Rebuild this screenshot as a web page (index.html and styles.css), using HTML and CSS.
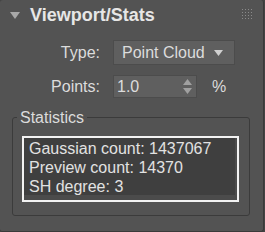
FILE: index.html
```html
<!DOCTYPE html>
<html lang="en">

<head>
    <meta charset="UTF-8">
    <meta name="viewport" content="width=device-width, initial-scale=1.0">
    <link rel="stylesheet" href="styles.css">
    <title>Viewport/Stats</title>
</head>

<body>
    <div class="panel">
        <div class="panel-head">
            <svg class="caret" width="10" height="7" viewBox="0 0 10 7">
                <polygon points="0,0 10,0 5,7" fill="#a8a8a8" />
            </svg>
            <span class="panel-title">Viewport/Stats</span>
            <svg class="grip" width="10" height="10" viewBox="0 0 10 10">
                <g fill="#8a8a8a">
                    <rect x="0" y="0" width="1" height="1" /><rect x="3" y="0" width="1" height="1" /><rect x="6" y="0" width="1" height="1" /><rect x="9" y="0" width="1" height="1" />
                    <rect x="0" y="3" width="1" height="1" /><rect x="3" y="3" width="1" height="1" /><rect x="6" y="3" width="1" height="1" /><rect x="9" y="3" width="1" height="1" />
                    <rect x="0" y="6" width="1" height="1" /><rect x="3" y="6" width="1" height="1" /><rect x="6" y="6" width="1" height="1" /><rect x="9" y="6" width="1" height="1" />
                    <rect x="0" y="9" width="1" height="1" /><rect x="3" y="9" width="1" height="1" /><rect x="6" y="9" width="1" height="1" /><rect x="9" y="9" width="1" height="1" />
                </g>
            </svg>
        </div>

        <div class="form-row row-type">
            <label class="form-label">Type:</label>
            <div class="dropdown">
                <span>Point Cloud</span>
                <svg width="9" height="6" viewBox="0 0 9 6">
                    <polygon points="0,0 9,0 4.5,6" fill="#d0d0d0" />
                </svg>
            </div>
        </div>

        <div class="form-row row-points">
            <label class="form-label">Points:</label>
            <div class="spinbox">
                <span>1.0</span>
                <svg width="9" height="15" viewBox="0 0 9 15">
                    <polygon points="4.5,0 9,6 0,6" fill="#a0a0a0" />
                    <polygon points="0,9 9,9 4.5,15" fill="#a0a0a0" />
                </svg>
            </div>
            <span class="unit">%</span>
        </div>

        <fieldset class="group">
            <legend>Statistics</legend>
            <div class="stats-box">
                <div class="stats-text">
                    <div>Gaussian count: 1437067</div>
                    <div>Preview count: 14370</div>
                    <div>SH degree: 3</div>
                </div>
            </div>
        </fieldset>
    </div>
</body>

</html>
```

FILE: styles.css
```css
* {
    margin: 0;
    padding: 0;
    box-sizing: border-box;
}

body {
    background-color: #444;
    font-family: "Liberation Sans", Arial, sans-serif;
    font-size: 16px;
    color: #dcdcdc;
}

.panel {
    width: 264px;
    height: 232px;
    background-color: #535353;
    border-right: 1px solid #3a3a3a;
    border-bottom: 1px solid #3a3a3a;
    border-radius: 3px;
}

.panel-head {
    display: flex;
    align-items: center;
    height: 40px;
    padding-left: 10px;
    padding-bottom: 10px;
}

.caret {
    margin-right: 10px;
}

.panel-title {
    font-size: 18px;
    font-weight: bold;
    color: #e6e6e6;
    line-height: 20px;
}

.grip {
    margin-left: auto;
    margin-right: 11px;
    margin-top: -2px;
}

.form-row {
    display: flex;
    align-items: center;
    line-height: 19px;
}

.form-label {
    width: 100px;
    text-align: right;
    margin-right: 13px;
}

.row-type {
    height: 25px;
}

.row-points {
    height: 23px;
    margin-top: 10px;
}

.dropdown {
    display: flex;
    align-items: center;
    justify-content: space-between;
    width: 122px;
    height: 25px;
    padding: 0 11px 0 8px;
    background-color: #5f5f5f;
    border: 1px solid #4c4c4c;
}

.spinbox {
    display: flex;
    align-items: center;
    justify-content: space-between;
    width: 84px;
    height: 23px;
    padding: 0 4px 0 3px;
    background-color: #5f5f5f;
    border: 1px solid #4c4c4c;
}

.unit {
    margin-left: 15px;
}

.group {
    margin: 10px 13px 0 12px;
    padding: 0 10px 13px 9px;
    border: 1px solid #3b3b3b;
    border-radius: 3px;
}

.group legend {
    margin-left: -5px;
    padding: 0 3px;
    line-height: 19px;
}

.stats-box {
    margin-top: 9px;
    height: 66px;
    border: 2px solid #f2f2f2;
    background-color: #4b4b4b;
    padding: 0 2px 5px 0;
}

.stats-text {
    height: 100%;
    background-color: #3f3f3f;
    padding: 1px 0 0 5px;
    line-height: 19px;
    color: #e2e2e2;
}
```
